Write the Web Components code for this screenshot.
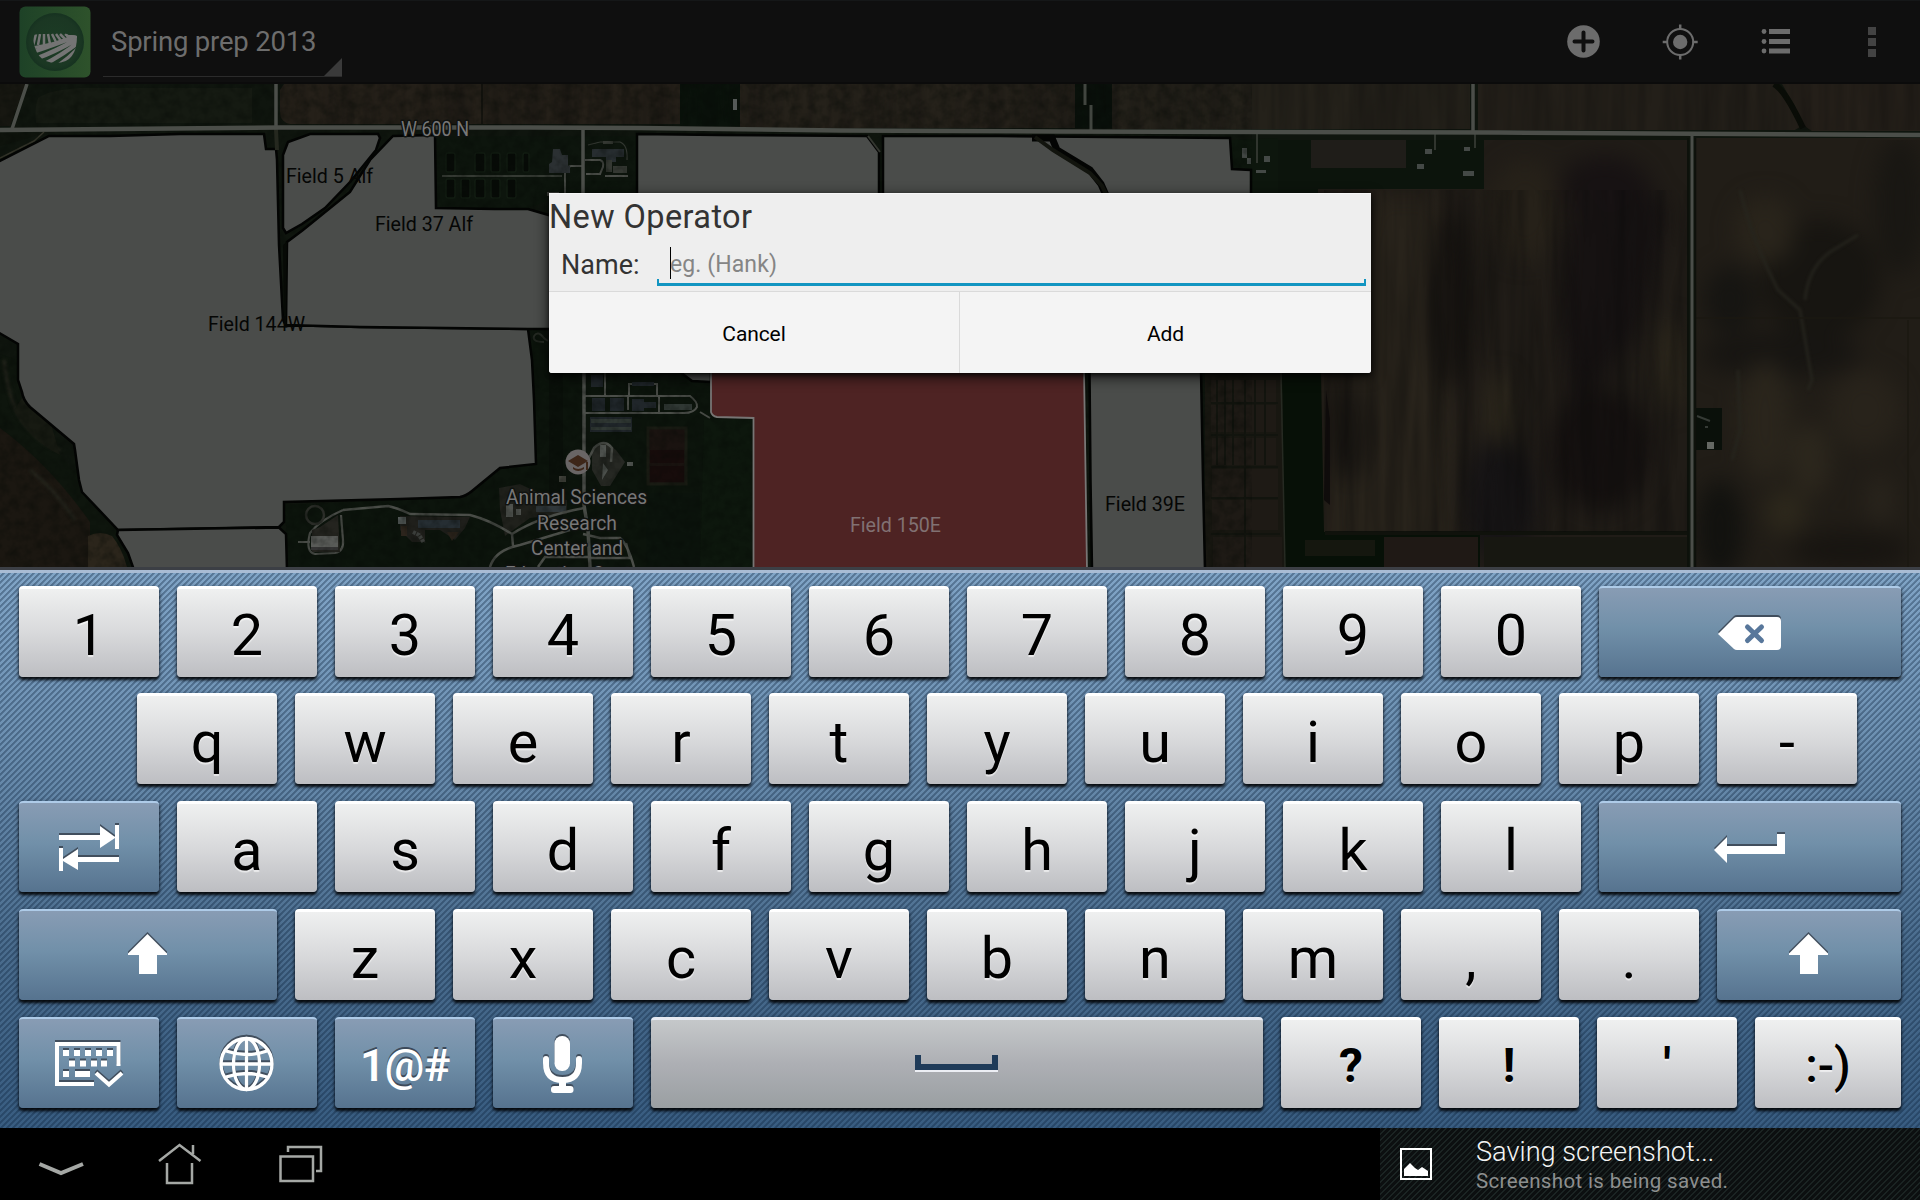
<!DOCTYPE html>
<html lang="en">
<head>
<meta charset="utf-8">
<title>Spring prep 2013</title>
<style>
html,body{margin:0;width:1920px;height:1200px;overflow:hidden;background:#000;font-family:Roboto,"Noto Sans",sans-serif}
</style>
</head>
<body>
<tablet-screen></tablet-screen>
<script>
const define = (name, html) => {
  const t = document.createElement('template');
  t.innerHTML = html;
  customElements.define(name, class extends HTMLElement {
    constructor() {
      super();
      this.attachShadow({ mode: 'open' }).appendChild(t.content.cloneNode(true));
    }
  });
};

/* ---------- action bar ---------- */
define('action-bar', `
<style>
:host{display:flex;height:84px;box-sizing:border-box;background:#0f0f0f;border-top:1px solid #151718;border-bottom:2px solid #0b0b0b;color:#6d6d6d;justify-content:space-between}
.left{display:flex;padding:5px 0 0 19px;gap:12px}
.logo{width:72px;height:72px}
.spinner{width:239px;height:71px;border-bottom:1px solid #2b2b2b;position:relative;font-size:27.500px;line-height:33px;padding:19px 0 0 8px;box-sizing:border-box;white-space:nowrap;letter-spacing:-.200px}
.spinner svg{position:absolute;right:0;bottom:0}
.right{display:flex}
.right svg{display:block;width:96px;height:83px}
</style>
<div class="left">
<svg class="logo" viewBox="0 0 72 72">
<defs><linearGradient id="g"><stop offset="0" stop-color="#1e4227"/><stop offset="1" stop-color="#2e522b"/></linearGradient>
<radialGradient id="h"><stop offset="0" stop-color="#1c3c25"/><stop offset=".85" stop-color="#1b3723"/><stop offset="1" stop-color="#163220"/></radialGradient>
<clipPath id="c"><path d="M14 29Q36 24 58 30Q58 57 37 57Q15 57 14 29Z"/></clipPath></defs>
<rect x=".500" y=".500" width="71" height="71" rx="6" fill="url(#g)"/><circle cx="36" cy="36" r="29" fill="url(#h)"/>
<g clip-path="url(#c)" fill="none" stroke="#747474">
<path d="M10 47Q32 40 60 29M16 53Q36 46 60 32M24 59Q42 50 60 36M36 62Q48 54 60 42" stroke-width="4.4"/>
<path d="M12 42Q34 39 58 30" stroke-width="3"/>
<path d="M14 40L17 28M19 39L21 28M25 39L25 28M31 38L29 28M37 36L33 28M42 35L37 28M47 34L41 28M52 32L46 28" stroke-width="2.5"/>
<path d="M46 29H60V32H48Z" fill="#747474" stroke="none"/></g></svg>
<div class="spinner">Spring prep 2013<svg width="18" height="18"><path d="M18 0V18H0Z" fill="#3a3a3a"/></svg></div>
</div>
<div class="right">
<svg viewBox="0 0 96 83"><circle cx="47.5" cy="40.5" r="16.3" fill="#6c6c6c"/><path d="M47.500 31.500V49.500M38.500 40.500H56.500" stroke="#0f0f0f" stroke-width="4" stroke-linecap="round"/></svg>
<svg viewBox="0 0 96 83"><circle cx="48.200" cy="41" r="13" fill="none" stroke="#6c6c6c" stroke-width="2"/><circle cx="48.200" cy="41" r="7.200" fill="#6c6c6c"/><path d="M48.200 23.500V29M48.200 53V58.500M30.700 41H36M60.500 41H65.700" stroke="#6c6c6c" stroke-width="2.500"/></svg>
<svg viewBox="0 0 96 83"><g fill="#6c6c6c"><circle cx="36" cy="30.500" r="2.400"/><circle cx="36" cy="40.500" r="2.400"/><circle cx="36" cy="50" r="2.400"/><path d="M41 28H62V33H41ZM41 38H62V43H41ZM41 47.500H62V52.500H41Z"/></g></svg>
<svg viewBox="0 0 96 83"><path d="M44 26H52V34H44ZM44 37H52V45H44ZM44 48H52V56H44Z" fill="#434343"/></svg>
</div>`);

/* ---------- map ---------- */
define('field-map', `
<style>
:host{display:block;height:483px;background:#0d130d;overflow:hidden}
svg{display:block}
text{font-family:Roboto,sans-serif;font-size:20px}
.f{fill:#4a4c4a;stroke:#030403;stroke-width:2.500}
.r{fill:none;stroke:#4b4e49}
.d{fill:#050605}
.l{fill:#777;stroke:#101210;stroke-width:3;paint-order:stroke;stroke-linejoin:round}
</style>
<svg width="1920" height="483" viewBox="0 84 1920 483">
<defs>
<filter id="b10" x="-30%" y="-30%" width="160%" height="160%" color-interpolation-filters="sRGB"><feGaussianBlur stdDeviation="11"/></filter>
<filter id="b2" color-interpolation-filters="sRGB"><feGaussianBlur stdDeviation="1.500"/></filter>
<filter id="soft" color-interpolation-filters="sRGB"><feGaussianBlur stdDeviation=".5"/></filter>
<filter id="grain" x="0" y="0" width="100%" height="100%" color-interpolation-filters="sRGB"><feTurbulence type="fractalNoise" baseFrequency=".07 .006" numOctaves="3" seed="4"/><feColorMatrix values="0 0 0 0 .03  0 0 0 0 .03  0 0 0 0 .03  1.600 0 0 0 -.5"/></filter>
<filter id="speck" x="0" y="0" width="100%" height="100%" color-interpolation-filters="sRGB"><feTurbulence type="fractalNoise" baseFrequency=".1" numOctaves="3" seed="8"/><feColorMatrix values="0 0 0 0 .02  0 0 0 0 .035  0 0 0 0 .02  1.900 0 0 0 -.7"/></filter>
<clipPath id="east"><path d="M1252 140H1687V567H1205V373H1252Z"/></clipPath>
<clipPath id="far"><path d="M1696 140H1920V567H1696Z"/></clipPath>
</defs>
<rect y="84" width="1920" height="483" fill="#0f150e"/>
<!-- north strip -->
<path d="M0 84H26L10 126H0Z" fill="#171711"/><path d="M38 98Q48 90 80 88H252V123H36Q34 108 38 98Z" fill="#151a12"/>
<path d="M284 84H680V124H290Q280 122 280 112V90Z" fill="#252019"/><path d="M482 84V124" stroke="#15140f" stroke-width="2"/>
<path d="M740 84H1075V128H740Z" fill="#25211a"/><path d="M1112 84H1470V129H1112Z" fill="#24211a"/><path d="M1478 84H1778L1800 127 1795 130H1478Z" fill="#231f19"/><path d="M1782 84H1920V131H1812Q1800 125 1795 106Z" fill="#241f19"/>
<path d="M1774 84Q1785 90 1803 128" stroke="#0a0d07" stroke-width="6" fill="none"/>
<path d="M680 84H740V126H680Z" fill="#0a120b"/><path d="M1075 84H1112V128H1075Z" fill="#0a120b"/>
<!-- far east -->
<rect x="1696" y="138" width="224" height="429" fill="#211d17"/>
<g clip-path="url(#far)"><g filter="url(#b10)">
<ellipse cx="1820" cy="280" rx="60" ry="60" fill="#171511"/><ellipse cx="1730" cy="300" rx="26" ry="34" fill="#161512"/><ellipse cx="1900" cy="205" rx="26" ry="70" fill="#191713"/>
<ellipse cx="1780" cy="355" rx="80" ry="22" fill="#171512"/><ellipse cx="1765" cy="420" rx="26" ry="60" fill="#2a251c"/><ellipse cx="1810" cy="460" rx="20" ry="36" fill="#2c271d"/><ellipse cx="1765" cy="230" rx="30" ry="34" fill="#29241b"/><ellipse cx="1785" cy="512" rx="20" ry="22" fill="#2d281c"/><ellipse cx="1880" cy="500" rx="12" ry="24" fill="#2a251d"/><ellipse cx="1720" cy="530" rx="24" ry="50" fill="#12120f"/><ellipse cx="1850" cy="550" rx="60" ry="20" fill="#181511"/><ellipse cx="1865" cy="410" rx="36" ry="40" fill="#28231b"/></g>
<path d="M1740 190Q1752 240 1778 290L1800 310 1812 380 1808 390M1805 300Q1808 268 1830 252L1858 235M1738 370L1740 430 1732 460" stroke="#26251e" stroke-width="2.500" fill="none" filter="url(#b2)"/>
<path d="M1696 318H1920M1908 320V567" stroke="#1b1812" stroke-width="1.500"/></g>
<path d="M1695 408H1722V450H1695Z" fill="#0a100a"/><path d="M1707 442H1714V449H1707Z" fill="#646863"/><path d="M1697 416L1710 421M1705 427H1708" stroke="#353a35" stroke-width="2"/>
<!-- east -->
<g clip-path="url(#east)"><rect x="1205" y="138" width="485" height="429" fill="#201c17"/>
<g filter="url(#b10)"><path d="M1372 193H1440L1460 567H1325V373Z" fill="#28231b"/><ellipse cx="1605" cy="190" rx="46" ry="34" fill="#171213"/><path d="M1570 160L1605 220 1650 190 1670 210 1640 330 1575 410 1560 320Z" fill="#161212"/><ellipse cx="1450" cy="300" rx="22" ry="90" fill="#161310"/><ellipse cx="1500" cy="500" rx="38" ry="60" fill="#161415"/><ellipse cx="1500" cy="410" rx="12" ry="36" fill="#2e291d"/><ellipse cx="1670" cy="365" rx="14" ry="46" fill="#2c271c"/><ellipse cx="1600" cy="450" rx="52" ry="60" fill="#151110"/><ellipse cx="1350" cy="430" rx="20" ry="50" fill="#191612"/><ellipse cx="1525" cy="210" rx="38" ry="50" fill="#262119"/></g>
<path d="M1252 138H1484V189H1318V380H1252Z" fill="#0c140c"/><path d="M1311 136H1406V168H1311Z" fill="#1f1d19"/>
<path d="M1282 373H1321L1324 532H1480V567H1284Z" fill="#071007"/><path d="M1205 373H1280L1285 567H1205Z" fill="#181711"/>
<path d="M1211 380H1276V402H1211ZM1211 405H1276V432H1211ZM1212 438H1276V465H1212ZM1212 469H1278V497H1212ZM1212 500H1278V530H1212ZM1213 537H1282V567H1213Z" fill="#1e1a15"/>
<path d="M1217 380V465M1225 380V465M1233 380V465M1245 380V567M1255 380V465M1265 380V465M1211 403H1278M1211 435H1278M1211 467H1278M1211 498H1278M1211 534H1280" stroke="#12140e" stroke-width="2"/>
<path d="M1305 540H1375V556H1305Z" fill="#15170f"/><path d="M1384 537H1478V567H1384Z" fill="#1f1915"/><path d="M1484 537H1688V567H1484Z" fill="#171711"/><path d="M1325 533H1688" stroke="#10120c" stroke-width="4"/>
<path d="M1326 390L1330 420V505L1324 500Z" fill="#110d0c"/></g>
<path d="M1281 373L1285 567" stroke="#262a22" stroke-width="1.500"/>
<rect x="280" y="84" width="1640" height="46" filter="url(#grain)" opacity=".35"/><rect x="1324" y="190" width="364" height="342" filter="url(#grain)" opacity=".4"/>
<path d="M1231 140L1278 138V193H1252V169H1232Z" fill="#0d160d"/><path d="M1242 148H1247V158H1242ZM1247 158H1251V164H1247ZM1264 156H1270V162H1264ZM1256 170H1266V173H1256ZM1425 149H1432V154H1425ZM1417 164H1424V169H1417ZM1463 171H1474V176H1463ZM1464 147H1470V151H1464Z" fill="#444946"/>
<path d="M1257 134V163M1435 134V150M1475 134V148" stroke="#30352e" stroke-width="2"/>
<!-- south west -->
<path d="M0 354L17 360 20 390 40 430 80 480 118 530 130 567H0Z" fill="#0e150d"/><path d="M0 428Q50 465 90 522L90 567H0Z" fill="#1b1711"/><path d="M88 567V536Q100 530 112 536 122 548 127 567Z" fill="#2b251b"/><path d="M4 360Q8 400 22 420 40 445 60 450M30 470Q55 490 75 520" stroke="#25251d" stroke-width="3" fill="none" filter="url(#b2)"/><path d="M14 410Q30 440 60 455L50 420 22 398Z" fill="#171a12"/>
<path d="M0 146L28 138 44 133H0Z" fill="#0e130c"/><path d="M0 158L34 141 44 132" stroke="#333329" stroke-width="1.500" fill="none"/>
<!-- farmstead north -->
<path d="M437 136H637V200H549L528 208H437Z" fill="#0d150d"/>
<g fill="#070b07" stroke="#121c12" stroke-width="1.500"><rect x="446" y="153" width="9" height="19" rx="2"/><rect x="475" y="153" width="10" height="19" rx="2"/><rect x="491" y="153" width="9" height="19" rx="2"/><rect x="507" y="153" width="9" height="19" rx="2"/><rect x="523" y="153" width="6" height="19" rx="2"/><rect x="446" y="179" width="9" height="19" rx="2"/><rect x="461" y="179" width="9" height="19" rx="2"/><rect x="475" y="179" width="10" height="19" rx="2"/><rect x="491" y="179" width="9" height="19" rx="2"/><rect x="507" y="179" width="9" height="19" rx="2"/></g>
<g filter="url(#soft)">
<path d="M442 176H545L562 176" stroke-width="2" stroke="#353a33" fill="none"/><path class="r" d="M565 193V168L571 166H582M585 160H600Q604 161 603 167L600 174H586M605 176H628" stroke-width="2"/>
<path d="M553 149H560L562 155H568V166H570V173H549V164L552 162Z" fill="#2b3032"/><path d="M592 149H624V157H616V162H606V157H592Z" fill="#272d30"/><path d="M603 141H613V144H603ZM606 160H612V172H606ZM613 166H627V173H613Z" fill="#343832"/><path d="M588 145L600 142H620Q628 145 627 160" stroke-width="1.200" stroke="#343832" fill="none"/>
<path d="M547 192H559V196H547Z" fill="#42433f"/></g>
<!-- farmstead south -->
<path d="M529 330H549V373H711V415L754 418V567H287V535L284 505 460 497 500 468 536 464Z" fill="#0c140c"/>
<rect x="549" y="373" width="14" height="160" fill="#0a100a"/><path d="M704 420H752V567H700Z" fill="#0d170d"/><path d="M646 493H700V567H646Z" fill="#0b130c"/>
<path d="M648 428H686V484H648Z" fill="#1a1310" stroke="#191b13" stroke-width="3"/><path d="M650 450H684V463H650ZM650 466H684V482H650Z" fill="#170c0b"/>
<g filter="url(#soft)">
<path class="r" d="M584 373V505L588 530 590 567" stroke-width="3.500"/><path class="r" d="M584 396H690Q698 402 697 407 694 413 684 413L584 413M605 373V395M628 396V410M659 396V412M629 395V384H657V396M700 412L710 418" stroke-width="2"/>
<path d="M591 375H603V387H591ZM592 398H605V411H592ZM610 398H624V411H610ZM632 399H644V411H632ZM644 402H656V408H644ZM632 382H654V386H632ZM590 417H632V432H590Z" fill="#20262a"/><path d="M664 404H692V410H664ZM591 419H631V423H591ZM591 427H631V430H591Z" fill="#303834"/>
<path d="M592 450Q603 438 616 450L625 462 610 486H601L592 470Z" fill="#262823"/><path class="r" d="M588 460L594 448Q604 438 612 448L611 462" stroke-width="2.500"/><path d="M600 445H606V457H600ZM603 463L608 470 602 480ZM627 462H633V466H627Z" fill="#505450"/>
<path d="M499 488L520 484 545 496 567 500V514L530 518 505 536 500 510Z" fill="#20211c"/><path d="M506 504H513V517H506ZM516 509H521V515H516Z" fill="#50534f"/><path d="M536 506H566V512H536Z" fill="#30373a"/><path d="M559 476H566V482H559Z" fill="#42433c"/>
<path class="r" d="M343 510L388 506Q398 508 410 514L470 515Q490 520 512 534 540 516 584 508M512 534L513 546M490 567Q495 550 520 545L570 530M583 534L600 538H620Q628 545 634 567M590 557H545L538 567M626 543L630 558H590" stroke-width="2.500"/>
<path class="r" d="M343 510Q320 520 310 533 305 552 315 554L335 553Q344 551 343 540L341 515M298 542H310" stroke-width="2.200"/><circle cx="315" cy="515" r="9" stroke-width="2.500" stroke="#2c2e29" fill="none"/>
<path d="M320 527L338 515 340 552H312V530Z" fill="#24241f"/><path d="M311 536H338V549H311Z" fill="#595b58"/><path d="M311 547H338V550H311Z" fill="#333"/><path d="M400 516L470 517 465 528 455 540 440 530H425V542H412L400 530Z" fill="#1f1f1b"/><path d="M398 517H406V524H398Z" fill="#555b5a"/><path d="M418 520H460V528H418Z" fill="#262e33"/><path d="M401 526H407V536H401ZM447 532H459L452 541Z" fill="#2c241c"/><path d="M413 532L419 535 424 543" stroke="#3a3d3a" stroke-width="4" stroke-dasharray="3 1" fill="none"/>
<path d="M534 336Q538 330 544 338L548 341M534 336Q532 342 544 342" stroke="#262b24" stroke-width="2" fill="none"/></g>
<rect y="84" width="1252" height="483" filter="url(#speck)" opacity=".4"/>
<!-- fields -->
<path class="f" d="M-4 163L49 136 110 136 180 134H264L266 149H276L277 160 279 245 283 320 286 326 303 325.500 360 327 528 329 532 360 534 400 536 464 500 468 472 491Q466 496 460 497L400 499 284 502V522L279 527 118 530 82 492 79 480 75 450 74 444 30 407Q23 400 22 392L18 380V344L-4 331Z"/>
<path class="f" d="M287 242L303 230 350 192 370 160 393 136 435 135 436 208 495 209 528 209 552 216V329H528L360 327 303 325.500 286 325Z"/>
<path d="M283 245L287 242 286 325 284 322Z" fill="#070a06"/>
<path class="f" d="M283 155L288 142 310 134H378L380 138 376 150 350 182 325 208 302 224 286 233 283 228Z"/>
<path class="f" d="M118 530L279 527.500 286 534 287 570H134L128 553 117 535Z"/>
<path class="f" d="M637 134L720 135 867 136 879 152V200H637Z"/><path class="f" d="M883 136H1000L1230 138 1232 169 1251 170V200H883Z"/>
<path d="M1032 138L1052 138 1057 150 1090 170 1101 184 1108 200" fill="none" stroke="#030403" stroke-width="7"/><path d="M1035 137L1053 150 1090 173 1102 186 1109 200" fill="none" stroke="#12140e" stroke-width="4"/>
<path d="M868 136L880 152" stroke="#33362f" stroke-width="2"/>
<path class="f" d="M680 372L692 381 711 382V372Z"/>
<path d="M711 370V412Q712 416 717 417L753.500 418V570H1087L1084 370Z" fill="#4e2323" stroke="#777574" stroke-width="1.800"/>
<path class="f" d="M1089.500 370L1090.500 480 1092 570H1205L1203 480 1201 370Z"/>
<!-- roads -->
<path class="r" d="M27 84L12 129M276 84V128M583 128V193M1473 84V131" stroke-width="3.500"/><path d="M1085 84V105M1091 105V130" stroke="#41453f" stroke-width="3"/><path d="M276 129L277 150" stroke="#25281f" stroke-width="4"/>
<path d="M735 99V110" stroke="#555a58" stroke-width="4"/>
<path class="r" d="M0 130L280 127.500H530L640 128 840 130.500 1060 131.500 1500 132.500 1920 135" stroke-width="4.500"/>
<path class="r" d="M1692 134V567" stroke-width="3"/><path d="M1688 138V567M1695.500 138V567" stroke="#0e100b" stroke-width="1.500"/>
<!-- labels -->
<text x="401" y="136" class="l" textLength="68" lengthAdjust="spacingAndGlyphs">W 600 N</text>
<text class="d" x="286" y="183" textLength="87" lengthAdjust="spacingAndGlyphs">Field 5 Alf</text><text class="d" x="375" y="231" textLength="98" lengthAdjust="spacingAndGlyphs">Field 37 Alf</text><text class="d" x="208" y="331" textLength="97" lengthAdjust="spacingAndGlyphs">Field 144W</text><text class="d" x="1105" y="511" textLength="80" lengthAdjust="spacingAndGlyphs">Field 39E</text>
<text x="850" y="532" textLength="91" lengthAdjust="spacingAndGlyphs" fill="#817172">Field 150E</text>
<circle cx="578" cy="462" r="12.500" fill="#696565"/><path d="M568 461L578 455 588 461 578 467ZM573 467Q578 471 584 467V469Q578 473 573 469ZM586 462H588V470H586Z" fill="#3d2618"/>
<g class="l"><text x="506" y="504" textLength="141" lengthAdjust="spacingAndGlyphs">Animal Sciences</text><text x="537" y="530" textLength="80" lengthAdjust="spacingAndGlyphs">Research</text><text x="531" y="555" textLength="92" lengthAdjust="spacingAndGlyphs">Center and</text><text x="505" y="581" textLength="142" lengthAdjust="spacingAndGlyphs">Education Center</text></g>
</svg>`);

/* ---------- dialog ---------- */
define('operator-dialog', `
<style>
:host{display:flex;flex-direction:column;width:822px;height:180px;background:#eee;box-shadow:0 4px 14px rgba(0,0,0,.75),0 2px 4px rgba(0,0,0,.6);border-radius:0 0 3px 3px;overflow:hidden;border-top:1px solid #f7f7f7;box-sizing:border-box}
h1{margin:0;font-size:32.500px;font-weight:400;line-height:38px;height:51px;padding-top:4px;box-sizing:border-box;color:#333;letter-spacing:.400px}
.row{display:flex;height:46px;color:#333}
label{font-size:27px;line-height:32px;width:95px;padding:4px 0 0 12px}
.input{width:709px;height:41px;border-bottom:3px solid #1295c1;position:relative;box-sizing:border-box;padding:6px 0 0 13px;font-size:23px;line-height:28px;color:#858585;margin-left:1px;letter-spacing:.1px}
.input:before,.input:after{content:"";position:absolute;bottom:0;width:2px;height:4px;background:#1295c1;left:0}
.input:after{left:auto;right:0}
i{position:absolute;left:13px;top:2px;width:1px;height:32px;background:#000}
.buttons{display:flex;flex:1;background:#f4f4f4;border-top:1px solid #dadada}
.buttons span{flex:1;display:flex;align-items:center;justify-content:center;font-size:21px;color:#000;padding-top:3px;letter-spacing:-.1px}
.buttons span:first-child{flex:none;width:411px;border-right:1px solid #dadada;box-sizing:border-box}
</style>
<h1>New Operator</h1>
<div class="row"><label>Name:</label><div class="input"><i></i>eg. (Hank)</div></div>
<div class="buttons"><span>Cancel</span><span>Add</span></div>`);

/* ---------- keyboard ---------- */
define('kb-key', `
<style>
:host{display:flex;width:140px;height:91px;flex:none;border-radius:4px;box-sizing:border-box;border-top:3px solid #fff;background:linear-gradient(#eff0f0,#d8d9db 50%,#bdbec2);box-shadow:0 3px 3px rgba(0,0,0,.85),0 1px 5px rgba(0,10,25,.4);justify-content:center;font-size:57.500px;line-height:67px;color:#000;text-shadow:0 2px 1px rgba(255,255,255,.6);padding-top:13px}
:host([blue]){border-top:2px solid #aecbe8;background:linear-gradient(#889cb4,#7190a9 45%,#56738f);padding:0;color:#fff;text-shadow:0 -2px 0 #3d4a5a}
:host([space]){border-top-color:#e6eaf2;background:linear-gradient(#c5c8ca,#adafb4 50%,#9a9fa2);padding:0}
:host([small]){font-size:48px;font-weight:700;padding-top:12px}
:host([face]){font-weight:500}
:host([sym]){font-size:44px;font-weight:600;padding-top:14px;letter-spacing:-.3px}
::slotted(svg){display:block;width:100%;height:91px;margin-top:-2px;filter:drop-shadow(0 -2px 0 #414e5d)}
:host([space]) ::slotted(svg){filter:drop-shadow(0 2px 0 #eceef4);margin-top:-3px}
</style><slot></slot>`);

define('kb-row', `<style>:host{display:flex;gap:18px;height:91px}</style><slot></slot>`);

const chars = s => [...s].map(c => `<kb-key>${c}</kb-key>`).join('');
define('soft-keyboard', `
<style>
:host{display:flex;flex-direction:column;height:561px;box-sizing:border-box;border-top:3px solid #3c3f45;padding:16px 19px 0;gap:17px;
background:linear-gradient(#a9bcd4 0 3px,transparent 3px),repeating-linear-gradient(135deg,rgba(10,32,58,.34) 0 1.300px,transparent 1.900px 3.700px,rgba(10,32,58,.34) 4.243px),linear-gradient(#80a4c6,#6d90b1 30%,#4a6c8d 68%,#385c80)}
.r1{margin-bottom:-1px}.r2{padding-left:118px}
</style>
<kb-row class="r1">${chars('1234567890')}<kb-key blue style="width:302px"><svg viewBox="0 0 302 91"><path d="M119 48L135 32Q136 31 138 31H178Q182 31 182 35V60Q182 64 178 64H138Q136 64 135 63Z" fill="#fff"/><path d="M148.500 41L162.500 54.500M162.500 41L148.500 54.500" stroke="#58779b" stroke-width="5" stroke-linecap="round"/></svg></kb-key></kb-row>
<kb-row class="r2">${chars('qwertyuiop-')}</kb-row>
<kb-row><kb-key blue><svg viewBox="0 0 140 91"><path d="M40 34H81V25L96 36V24H100V48H96V37L81 47V39H40ZM40 47H44V58L59 48V56H100V61H59V69L44 60V70H40Z" fill="#fff"/></svg></kb-key>${chars('asdfghjkl')}<kb-key blue style="width:302px"><svg viewBox="0 0 302 91"><path d="M115 49L128 36V45H178V33H186V53H128V62Z" fill="#fff"/></svg></kb-key></kb-row>
<kb-row><kb-key blue style="width:258px"><svg viewBox="0 0 258 91"><path d="M128.500 25L148 44.500V46H138V65H120V46H109V44.500Z" fill="#fff"/></svg></kb-key>${chars('zxcvbnm,.')}<kb-key blue style="width:184px"><svg viewBox="0 0 184 91"><path d="M91.500 25L111 44.500V46H101V65H83V46H72V44.500Z" fill="#fff"/></svg></kb-key></kb-row>
<kb-row><kb-key blue><svg viewBox="0 0 140 91"><path d="M99.500 49V27H38V67H75" fill="none" stroke="#fff" stroke-width="4"/><path d="M77 56L90 67.500 103 56" fill="none" stroke="#fff" stroke-width="4"/><path d="M44 33H50V39H44ZM55 33H61V39H55ZM66 33H72V39H66ZM77 33H83V39H77ZM88 33H94V39H88ZM50 43.500H56V49.500H50ZM61 43.500H67V49.500H61ZM72 43.500H78V49.500H72ZM82 43.500H88V49.500H82ZM44 54H50V60H44ZM56 54H71V60H56Z" fill="#fff"/></svg></kb-key><kb-key blue><svg viewBox="0 0 140 91"><g fill="none" stroke="#fff" stroke-width="3.300"><circle cx="69.500" cy="47" r="25.500"/><ellipse cx="69.500" cy="47" rx="13" ry="25.500"/><path d="M69.500 21V73M44 47H95M49 34Q69.500 41 90 34M49 60Q69.500 53 90 60"/></g></svg></kb-key><kb-key blue sym>1@#</kb-key><kb-key blue><svg viewBox="0 0 140 91"><rect x="61.500" y="19" width="15.500" height="35" rx="7.500" fill="#fff"/><path d="M53 42V46Q53 63 69.500 63 86 63 86 46V42" fill="none" stroke="#fff" stroke-width="6" stroke-linecap="round"/><rect x="58" y="69" width="22.500" height="7" rx="3" fill="#fff"/><path d="M66 62H73V71H66Z" fill="#fff"/></svg></kb-key><kb-key space style="width:612px"><svg viewBox="0 0 612 91"><path d="M264 38H270V47H341V38H347V53H264Z" fill="#1f3b59"/></svg></kb-key><kb-key small>?</kb-key><kb-key small>!</kb-key><kb-key small>'</kb-key><kb-key small face style="width:146px">:-)</kb-key></kb-row>`);

/* ---------- system bar ---------- */
define('system-bar', `
<style>
:host{display:flex;height:72px;background:#000;justify-content:space-between}
.note{width:540px;display:flex;box-sizing:border-box;padding-left:20px;background:repeating-linear-gradient(135deg,#1b2423 0 .8px,#0c0f10 1.400px 3.700px,#1b2423 4.243px)}
.note svg{width:32px;height:32px;margin-top:20px}
.txt{padding-left:44px;white-space:nowrap}
b{display:block;font-weight:300;font-size:27.200px;line-height:32px;color:#f4f4f4;padding-top:8px}
p{margin:0;font-size:20.500px;line-height:26px;color:#8d8f8f;letter-spacing:.35px}
</style>
<svg width="400" height="72" viewBox="0 0 400 72" fill="none" stroke="#a5a8a5"><path d="M39.500 36L61 45 83 36" stroke-width="4"/><path d="M159 33L179.500 17 200.500 33M167 35V55H192V35M193 17V26" stroke-width="2.500"/><path d="M280.500 28.500H313V53H280.500ZM288 24V19H321V43H316" stroke-width="2.500"/></svg>
<div class="note"><svg viewBox="0 0 32 32"><path d="M1 1H31V31H1Z" fill="none" stroke="#fff" stroke-width="2"/><path d="M4 28V21L10 15 15 20 18 22 22 19 28 23V28Z" fill="#fff"/></svg><div class="txt"><b>Saving screenshot...</b><p>Screenshot is being saved.</p></div></div>`);

define('tablet-screen', `
<style>
:host{display:flex;flex-direction:column;width:1920px;height:1200px;overflow:hidden;position:relative}
operator-dialog{position:absolute;left:549px;top:193px}
</style>
<action-bar></action-bar><field-map></field-map><soft-keyboard></soft-keyboard><system-bar></system-bar>
<operator-dialog></operator-dialog>`);
</script>
</body>
</html>
